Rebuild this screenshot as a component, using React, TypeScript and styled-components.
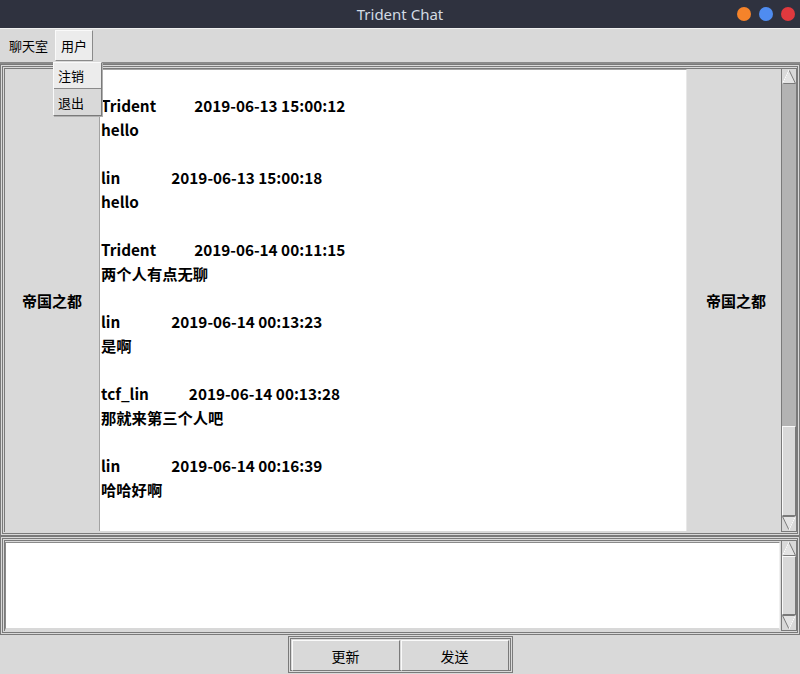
import React from "react";
import styled, { createGlobalStyle } from "styled-components";

const Global = createGlobalStyle`
  html, body { margin: 0; padding: 0; background: #d9d9d9; }
  body { font-family: "Noto Sans CJK SC", "Noto Sans", sans-serif; }
  * { box-sizing: border-box; }
`;

const Window = styled.div`
  width: 800px;
  height: 674px;
  display: flex;
  flex-direction: column;
  background: #d9d9d9;
  position: relative;
  overflow: hidden;
`;

const TitleBar = styled.div`
  height: 28px;
  flex: none;
  background: #2f323f;
  display: flex;
  align-items: center;
  justify-content: center;
  position: relative;
  color: #d3dae3;
  font-family: "Noto Sans", sans-serif;
  font-size: 15px;
`;

const Dots = styled.div`
  position: absolute;
  right: 5px;
  top: 7px;
  display: flex;
  gap: 8px;
`;

const Dot = styled.span<{ $c: string }>`
  width: 14px;
  height: 14px;
  border-radius: 50%;
  background: ${(p) => p.$c};
`;

const MenuBar = styled.div`
  height: 36px;
  flex: none;
  display: flex;
  align-items: stretch;
  padding: 1px 2px 0 3px;
  border-top: 1px solid #f0f0f0;
  border-bottom: 2px solid #8a8a8a;
  font-size: 13px;
  color: #000;
`;

const MenuItem = styled.div<{ $active?: boolean }>`
  display: flex;
  align-items: center;
  padding: 0 5px;
  margin-right: 1px;
  background: ${(p) => (p.$active ? "#ececec" : "transparent")};
  border: 1px solid ${(p) => (p.$active ? "#fafafa" : "transparent")};
  border-right-color: ${(p) => (p.$active ? "#8a8a8a" : "transparent")};
  border-bottom-color: ${(p) => (p.$active ? "#8a8a8a" : "transparent")};
  margin-bottom: 1px;
`;

const Dropdown = styled.div`
  position: absolute;
  left: 53px;
  top: 62px;
  width: 49px;
  background: #d9d9d9;
  border: 1px solid #fafafa;
  border-right-color: #7a7a7a;
  border-bottom-color: #7a7a7a;
  box-shadow: 1px 1px 0 #b0b0b0;
  z-index: 5;
  font-size: 13px;
`;

const DropItem = styled.div<{ $hl?: boolean }>`
  height: 26px;
  display: flex;
  align-items: center;
  padding-left: 4px;
  background: ${(p) => (p.$hl ? "#ececec" : "#d9d9d9")};
  border-bottom: ${(p) => (p.$hl ? "1px solid #8a8a8a" : "none")};
`;

const Panel = styled.div<{ $h: number }>`
  height: ${(p) => p.$h}px;
  flex: none;
  border: 3px double #7a7a7a;
  padding: 1px 0 1px 1px;
  display: flex;
`;

const PanelInner = styled.div`
  flex: 1;
  display: grid;
  grid-template-columns: 94px 1fr 94px 16px;
  border-left: 1px solid #7a7a7a;
  border-top: 1px solid #7a7a7a;
  min-height: 0;
`;

const SideLabel = styled.div<{ $shift?: number }>`
  display: flex;
  align-items: center;
  justify-content: center;
  padding-left: ${(p) => p.$shift ?? 0}px;
  font-weight: 700;
  font-size: 15px;
  color: #000;
`;

const ChatArea = styled.div`
  background: #fff;
  margin: 0 0 1px 0;
  border-left: 1px solid #a3a3a3;
  border-top: 1px solid #a3a3a3;
  border-right: 1px solid #e8e8e8;
  padding: 23px 0 0 1px;
  font-weight: 700;
  font-size: 15.3px;
  line-height: 24px;
  color: #000;
  overflow: hidden;
`;

const Line = styled.div`
  height: 24px;
  white-space: nowrap;
`;

const Stamp = styled.span<{ $gap: number }>`
  margin-left: ${(p) => p.$gap}px;
`;

const ScrollBar = styled.div`
  display: flex;
  flex-direction: column;
  border-left: 1px solid #7a7a7a;
  border-right: 1px solid #7a7a7a;
  border-bottom: 1px solid #7a7a7a;
  background: #b3b3b3;
`;

const Arrow = styled.div`
  height: 15px;
  flex: none;
  display: flex;
  align-items: center;
  justify-content: center;
  background: #d9d9d9;
`;

const Trough = styled.div`
  flex: 1;
  display: flex;
  flex-direction: column;
  justify-content: flex-end;
`;

const Thumb = styled.div<{ $h: string }>`
  height: ${(p) => p.$h};
  background: #d9d9d9;
  border: 1px solid #fafafa;
  border-right-color: #7a7a7a;
  border-bottom-color: #7a7a7a;
`;

const InputInner = styled.div`
  flex: 1;
  display: grid;
  grid-template-columns: 1fr 16px;
  border-left: 1px solid #7a7a7a;
  border-top: 1px solid #7a7a7a;
`;

const InputBox = styled.div`
  background: #fff;
  margin: 1px 1px 1px 0;
  border: 1px solid #d0d0d0;
  border-top-color: #8a8a8a;
  border-left-color: #8a8a8a;
  border-right-color: #f0f0f0;
  border-bottom: 2px solid #d8d8d8;
`;

const ButtonRow = styled.div`
  flex: 1;
  display: flex;
  justify-content: center;
  align-items: flex-start;
  padding-top: 1px;
`;

const ButtonFrame = styled.div`
  display: flex;
  gap: 1px;
  border: 3px double #7a7a7a;
  padding: 1px;
  height: 37px;
`;

const Btn = styled.button`
  width: 108px;
  height: 31px;
  background: #d9d9d9;
  border: 1px solid #fafafa;
  border-right-color: #7a7a7a;
  border-bottom-color: #7a7a7a;
  font-family: "Noto Sans CJK SC", sans-serif;
  font-size: 14px;
  color: #000;
  padding: 0;
`;

const UpIcon = ({ down }: { down?: boolean }) => (
  <svg width="14" height="15" viewBox="0 0 14 15" style={{ transform: down ? "rotate(180deg)" : undefined }}>
    <polygon points="7,1 13.5,14.5 0.5,14.5" fill="#e4e4e4" stroke="#7a7a7a" strokeWidth="1" />
    <polyline points="0.5,14.5 7,1" fill="none" stroke="#ffffff" strokeWidth="1.2" />
  </svg>
);

const messages = [
  { name: "Trident", gap: 38, time: "2019-06-13 15:00:12", text: "hello" },
  { name: "lin", gap: 51, time: "2019-06-13 15:00:18", text: "hello" },
  { name: "Trident", gap: 38, time: "2019-06-14 00:11:15", text: "两个人有点无聊" },
  { name: "lin", gap: 51, time: "2019-06-14 00:13:23", text: "是啊" },
  { name: "tcf_lin", gap: 40, time: "2019-06-14 00:13:28", text: "那就来第三个人吧" },
  { name: "lin", gap: 51, time: "2019-06-14 00:16:39", text: "哈哈好啊" },
];

export default function App() {
  return (
    <Window>
      <Global />
      <TitleBar>
        Trident Chat
        <Dots>
          <Dot $c="#f5832a" />
          <Dot $c="#4f8cf0" />
          <Dot $c="#e0393e" />
        </Dots>
      </TitleBar>
      <MenuBar>
        <MenuItem>聊天室</MenuItem>
        <MenuItem $active>用户</MenuItem>
      </MenuBar>
      <Dropdown>
        <DropItem $hl>注销</DropItem>
        <DropItem>退出</DropItem>
      </Dropdown>
      <Panel $h={472}>
        <PanelInner>
          <SideLabel>帝国之都</SideLabel>
          <ChatArea>
            {messages.map((m, i) => (
              <React.Fragment key={i}>
                <Line>
                  {m.name}
                  <Stamp $gap={m.gap}>{m.time}</Stamp>
                </Line>
                <Line>{m.text}</Line>
                <Line />
              </React.Fragment>
            ))}
          </ChatArea>
          <SideLabel $shift={4}>帝国之都</SideLabel>
          <ScrollBar>
            <Arrow>
              <UpIcon />
            </Arrow>
            <Trough>
              <Thumb $h="90px" />
            </Trough>
            <Arrow>
              <UpIcon down />
            </Arrow>
          </ScrollBar>
        </PanelInner>
      </Panel>
      <Panel $h={99}>
        <InputInner>
          <InputBox />
          <ScrollBar>
            <Arrow>
              <UpIcon />
            </Arrow>
            <Trough>
              <Thumb $h="100%" />
            </Trough>
            <Arrow>
              <UpIcon down />
            </Arrow>
          </ScrollBar>
        </InputInner>
      </Panel>
      <ButtonRow>
        <ButtonFrame>
          <Btn>更新</Btn>
          <Btn>发送</Btn>
        </ButtonFrame>
      </ButtonRow>
    </Window>
  );
}
